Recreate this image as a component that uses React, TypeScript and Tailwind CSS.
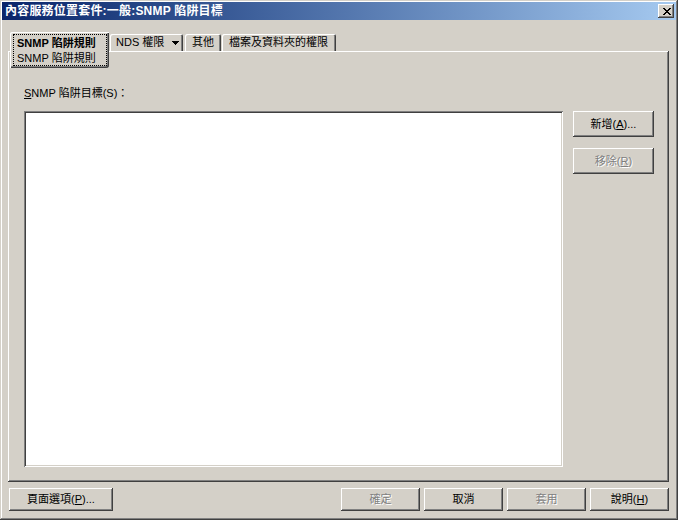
import React from "react";

const raised =
  "shadow-[inset_-1px_-1px_#404040,inset_1px_1px_#ffffff,inset_-2px_-2px_#808080,inset_2px_2px_#d4d0c8]";

function Btn({
  children,
  className = "",
  disabled = false,
}: {
  children: React.ReactNode;
  className?: string;
  disabled?: boolean;
}) {
  return (
    <div
      className={`flex items-center justify-center whitespace-nowrap bg-[#d4d0c8] ${raised} text-[11px] leading-none ${
        disabled ? "text-[#808080] [text-shadow:1px_1px_0_#ffffff]" : "text-black"
      } ${className}`}
    >
      {children}
    </div>
  );
}

const closePixels = [
  "11000011",
  "01100110",
  "00111100",
  "00011000",
  "00111100",
  "01100110",
  "11000011",
];

function CloseGlyph() {
  const rects: React.ReactNode[] = [];
  closePixels.forEach((row, y) =>
    row.split("").forEach((c, x) => {
      if (c === "1") rects.push(<rect key={`${x}-${y}`} x={x} y={y} width={1} height={1} fill="#000" />);
    })
  );
  return (
    <svg width="8" height="7" viewBox="0 0 8 7" shapeRendering="crispEdges">
      {rects}
    </svg>
  );
}

const tabShadow = "shadow-[inset_1px_1px_#ffffff,inset_-1px_0_#404040,inset_-2px_0_#808080]";

export default function App() {
  return (
    <div className="w-[678px] h-[520px] bg-[#d4d0c8] flex flex-col p-[2px] shadow-[inset_-1px_-1px_#404040,inset_1px_1px_#d4d0c8,inset_-2px_-2px_#808080,inset_2px_2px_#ffffff] font-['Liberation_Sans','Noto_Sans_CJK_TC',sans-serif] select-none">
      {/* title bar */}
      <div className="h-[18px] flex items-center justify-between bg-linear-to-r from-[#0a246a] to-[#a6caf0] pl-[3px] pr-[2px]">
        <span className="text-white font-bold text-[12px] leading-none tracking-[0.2px] whitespace-nowrap">
          內容服務位置套件:一般:SNMP 陷阱目標
        </span>
        <div className={`w-[16px] h-[14px] bg-[#d4d0c8] ${raised} flex items-center justify-center pl-[1px]`}>
          <CloseGlyph />
        </div>
      </div>

      {/* body */}
      <div className="flex flex-col pl-[6px] pr-[7px] pt-[12px]">
        {/* tab strip */}
        <div className="h-[19px] flex items-start">
          <div className="relative z-10 shrink-0 ml-[2px] w-[99px] h-[36px] bg-[#d4d0c8] rounded-tl-[2px] rounded-br-[3px] shadow-[inset_1px_1px_#ffffff,inset_-1px_-1px_#404040,inset_-2px_-2px_#808080] pt-[2px] pl-[3px] pr-[2px] pb-[2px]">
            <div className="w-[94px] h-[32px] border border-dotted border-black flex flex-col pl-[3px] text-[11px] leading-none text-black whitespace-nowrap">
              <span className="font-bold mt-[3px]">SNMP 陷阱規則</span>
              <span className="mt-[4px]">SNMP 陷阱規則</span>
            </div>
          </div>
          <div className={`shrink-0 mt-[2px] ml-[1px] w-[73px] h-[17px] bg-[#d4d0c8] rounded-t-[2px] ${tabShadow} flex items-center pl-[6px] text-[11px] leading-none text-black whitespace-nowrap`}>
            <span>NDS 權限</span>
            <svg width="8" height="4" viewBox="0 0 8 4" className="ml-[7px] shrink-0" shapeRendering="crispEdges">
              <polygon points="0,0 8,0 4,4" fill="#000" />
            </svg>
          </div>
          <div className={`shrink-0 mt-[2px] ml-[2px] w-[36px] h-[17px] bg-[#d4d0c8] rounded-t-[2px] ${tabShadow} flex items-center justify-center text-[11px] leading-none text-black whitespace-nowrap`}>
            其他
          </div>
          <div className={`shrink-0 mt-[2px] ml-[1px] w-[114px] h-[17px] bg-[#d4d0c8] rounded-t-[2px] ${tabShadow} flex items-center pl-[7px] text-[11px] leading-none text-black whitespace-nowrap`}>
            檔案及資料夾的權限
          </div>
        </div>

        {/* panel */}
        <div className="h-[431px] bg-[#d4d0c8] shadow-[inset_-1px_-1px_#404040,inset_1px_1px_#ffffff,inset_-2px_-2px_#808080] pl-[16px] pt-[35px] flex flex-col">
          <div className="h-[14px] flex items-center text-[11px] leading-none text-black whitespace-nowrap">
            <span className="underline">S</span>NMP 陷阱目標(S)：
          </div>
          <div className="mt-[11px] flex items-start">
            <div className="w-[539px] h-[356px] bg-white shadow-[inset_1px_1px_#808080,inset_-1px_-1px_#ffffff,inset_2px_2px_#404040,inset_-2px_-2px_#d4d0c8]" />
            <div className="ml-[10px] flex flex-col gap-[11px]">
              <Btn className="w-[81px] h-[26px]">
                新增(<span className="underline">A</span>)...
              </Btn>
              <Btn className="w-[81px] h-[26px]" disabled>
                移除(<span className="underline">R</span>)
              </Btn>
            </div>
          </div>
        </div>

        {/* bottom buttons */}
        <div className="mt-[6px] h-[23px] flex items-center justify-between">
          <Btn className="ml-[1px] w-[104px] h-[23px]">
            頁面選項(<span className="underline">P</span>)...
          </Btn>
          <div className="flex gap-[4px]">
            <Btn className="w-[79px] h-[23px]" disabled>
              確定
            </Btn>
            <Btn className="w-[79px] h-[23px]">取消</Btn>
            <Btn className="w-[79px] h-[23px]" disabled>
              套用
            </Btn>
            <Btn className="w-[79px] h-[23px]">
              說明(<span className="underline">H</span>)
            </Btn>
          </div>
        </div>
      </div>
    </div>
  );
}
